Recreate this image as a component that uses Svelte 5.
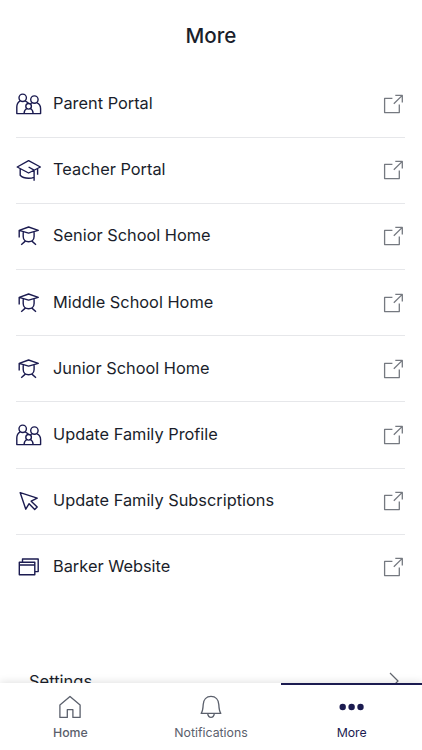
<script>
    const links = [
        { icon: 'family', label: 'Parent Portal' },
        { icon: 'cap', label: 'Teacher Portal' },
        { icon: 'student', label: 'Senior School Home' },
        { icon: 'student', label: 'Middle School Home' },
        { icon: 'student', label: 'Junior School Home' },
        { icon: 'family', label: 'Update Family Profile' },
        { icon: 'cursor', label: 'Update Family Subscriptions' },
        { icon: 'windows', label: 'Barker Website' }
    ];

    const tabs = ['Home', 'Notifications', 'More'];

    let selected = $state('More');
</script>

<div class="app">
    <main>
        <h1>More</h1>

        <ul class="links">
            {#each links as link}
                <li>
                    <svg class="icon" viewBox="0 0 26 26">
                        {#if link.icon === 'family'}
                            <circle cx="6.7" cy="6.8" r="3.7" />
                            <circle cx="18.4" cy="8.6" r="3.7" />
                            <circle cx="12.6" cy="15.3" r="2.8" />
                            <path d="M4.2 9.8C1.8 11.2.8 13.3.8 16v6.6h23.8v-4.9c0-2.7-1.2-4.7-3.6-5.8M9.2 9.8c1.6.8 2.8 1.8 3.4 2.7M15.7 11.8l-1.2 1.2M8.1 22.6c0-2.5 1-4.2 2.7-5.1M17.1 22.6c0-2.5-1-4.2-2.7-5.1" />
                        {:else if link.icon === 'cap'}
                            <path d="M1.2 10 12.6 3.7 24.4 10l-11.8 6zM4.2 12v6.2c1.7 1.9 4.8 3 8.4 3 2 0 3.8-.3 5.4-.9M21.6 12v5.7M12.6 10l5.5 3.2v10.5" />
                        {:else if link.icon === 'student'}
                            <path d="M3.2 7.3 12.6 4l9.7 3.3-9.7 2.8zM3.2 7.3v7.2M7.2 9v4.6c0 3 2.2 5.2 5.4 5.2s5.5-2.2 5.5-5.2V9M5.2 21.7l4.1-3.6M20 21.7l-4.1-3.6" />
                        {:else if link.icon === 'cursor'}
                            <path d="m4.2 4.7 17 5.5-6 3 6 5.8-2.5 2.5-5.6-5.8-3.3 5.5z" />
                        {:else}
                            <path d="M6.5 8V5h15.7v12.6h-3.4M3.3 8.2h15.5v12.6H3.3zM3.3 11h15.5" />
                        {/if}
                    </svg>
                    <span>{link.label}</span>
                    <svg class="external" viewBox="0 0 22 22">
                        <path d="M9.4 5.4H1.6v14.2h14.7v-8.2M10.8 10.8l8.5-8.4M12.3 2.4h7v7" />
                    </svg>
                </li>
            {/each}
        </ul>

        <div class="settings">
            <span>Settings</span>
            <svg class="chevron" viewBox="0 0 12 20"><path d="m2 2 8 8-8 8" /></svg>
        </div>
    </main>

    <nav>
        {#each tabs as tab}
            <button class:selected={selected === tab} onclick={() => (selected = tab)}>
                <svg viewBox="0 0 26 26">
                    {#if tab === 'Home'}
                        <path d="M2.9 11 13 2.4 23.1 11v12.4h-7.2v-7.7h-5.6v7.7H2.9z" />
                    {:else if tab === 'Notifications'}
                        <path d="M3.2 19.4C4.8 17 5 14.5 5.2 10.6c.2-5 3.2-8.2 7.8-8.2s7.6 3.2 7.8 8.2c.2 3.9.4 6.4 2 8.8zM9.7 19.6c.3 2.4 1.5 3.7 3.3 3.7s3-1.3 3.3-3.7" />
                    {:else}
                        <g class="dots">
                            <circle cx="3.7" cy="13" r="3.2" />
                            <circle cx="12.6" cy="13" r="3.2" />
                            <circle cx="21.5" cy="13" r="3.2" />
                        </g>
                    {/if}
                </svg>
                <span>{tab}</span>
            </button>
        {/each}
    </nav>
</div>

<style>
    :global(body) {
        margin: 0;
        background: #fff;
    }

    .app {
        display: flex;
        flex-direction: column;
        height: 100vh;
        overflow: hidden;
        font-family: Inter, sans-serif;
        color: #1a1e2b;
    }

    main {
        flex: 1;
        min-height: 0;
        overflow: hidden;
    }

    h1 {
        margin: 0;
        height: 71.5px;
        line-height: 71px;
        font-size: 20.6px;
        font-weight: 450;
        text-align: center;
    }

    svg {
        fill: none;
        stroke: currentColor;
        stroke-linejoin: round;
    }

    .links {
        margin: 0;
        padding: 0 17px 0 16px;
        list-style: none;
    }

    li {
        display: flex;
        align-items: center;
        box-sizing: border-box;
        height: 66.2px;
        font-size: 16.35px;
        border-bottom: 1px solid #e6e7ea;
    }

    li span {
        margin-top: -2px;
    }

    li:last-child {
        border-color: transparent;
    }

    .icon {
        width: 26px;
        height: 26px;
        margin-right: 11px;
        color: #1b1b50;
        stroke-width: 1.4;
    }

    .external {
        width: 22px;
        height: 22px;
        margin-left: auto;
        color: #757980;
        stroke-width: 1.3;
    }

    .settings {
        display: flex;
        align-items: center;
        justify-content: space-between;
        height: 66px;
        margin-top: 47px;
        padding: 0 22px 0 29px;
        font-size: 16.5px;
    }

    .chevron {
        width: 12px;
        height: 20px;
        color: #62666f;
        stroke-width: 1.2;
    }

    nav {
        position: relative;
        display: flex;
        height: 67px;
        background: #fff;
        box-shadow: 0 -1px 8px rgba(0, 0, 0, .12);
    }

    button {
        flex: 1 1 0;
        display: flex;
        flex-direction: column;
        align-items: center;
        gap: 5px;
        padding: 9px 0 0;
        border: none;
        border-top: 2px solid transparent;
        background: none;
        font-family: inherit;
        font-size: 12.3px;
        font-weight: 400;
        line-height: 16px;
        color: #5b606c;
    }

    button:first-child {
        font-weight: 500;
    }

    button.selected {
        border-color: #1b1b50;
        color: #1b1b50;
    }

    button svg {
        width: 26px;
        height: 26px;
        stroke-width: 1.3;
    }

    .dots {
        fill: currentColor;
        stroke: none;
    }
</style>
